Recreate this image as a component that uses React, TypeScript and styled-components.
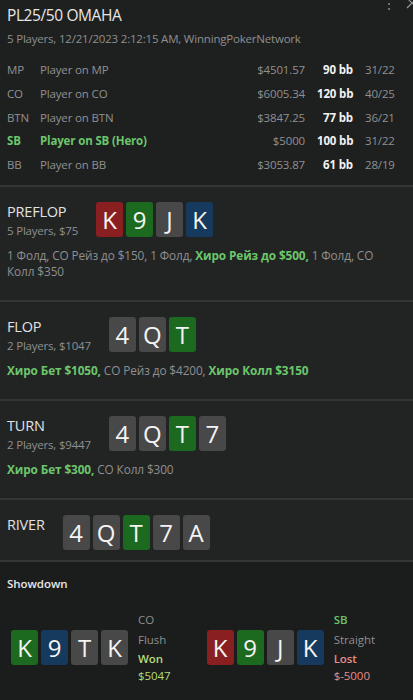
import React from "react";
import styled, { createGlobalStyle } from "styled-components";

const Global = createGlobalStyle`
  html, body { margin: 0; padding: 0; background: #1e2020; }
  body { font-family: "Open Sans", "Noto Sans", sans-serif; }
`;

const Page = styled.div`
  width: 413px;
  min-height: 700px;
  background: #1e2020;
  color: #9a9a9a;
  position: relative;
  overflow: hidden;
`;

const Header = styled.section`
  padding: 4px 8px 9px 7px;
  border-bottom: 2px solid #343636;
`;

const Title = styled.div`
  font-size: 15.5px;
  letter-spacing: -0.4px;
  line-height: 22px;
  color: #e6e6e6;
`;

const Sub = styled.div<{ $mt?: number }>`
  margin-top: ${(p) => p.$mt ?? 0}px;
  font-size: 11.5px;
  letter-spacing: -0.2px;
  line-height: 18px;
  color: #8f8f8f;
`;

const PlayerGrid = styled.div`
  margin-top: 10px;
  display: grid;
  grid-template-columns: 33px 1fr 65px 48px 40px;
  grid-auto-rows: 23.7px;
  align-items: center;
  font-size: 11.5px;
  letter-spacing: -0.15px;
`;

const Cell = styled.div<{ $hero?: boolean; $align?: string; $strong?: boolean; $pr?: number }>`
  color: ${(p) => (p.$strong ? "#f2f2f2" : p.$hero ? "#6cc66c" : "#909090")};
  font-weight: ${(p) => (p.$strong || p.$hero ? 700 : 400)};
  text-align: ${(p) => p.$align || "left"};
  padding-right: ${(p) => p.$pr || 0}px;
  white-space: nowrap;
`;

const TopIcons = styled.div`
  position: absolute;
  top: 0;
  right: -6px;
  display: flex;
  gap: 13px;
`;

const Street = styled.section<{ $pb?: number }>`
  background: #222424;
  padding: 15px 8px ${(p) => p.$pb ?? 21}px 7px;
  border-bottom: 2px solid #343636;
  display: flex;
  flex-direction: column;
  gap: 7px;
`;

const StreetTop = styled.div`
  display: flex;
  align-items: flex-start;
  gap: 18px;
`;

const StreetLabel = styled.div`
  display: flex;
  flex-direction: column;
`;

const StreetName = styled.div`
  font-size: 14.5px;
  letter-spacing: -0.2px;
  line-height: 20px;
  color: #e2e2e2;
`;

const Cards = styled.div`
  display: flex;
  gap: 3px;
`;

const colors: Record<string, string> = {
  r: "#8a1f22",
  g: "#1b6a20",
  x: "#484848",
  b: "#153a5e",
};

const Card = styled.div<{ $c: string }>`
  width: 27px;
  height: 35px;
  border-radius: 3px;
  background: ${(p) => colors[p.$c]};
  color: #f4f4f4;
  font-size: 24px;
  line-height: 35px;
  text-align: center;
`;

const Action = styled.div`
  font-size: 11.8px;
  letter-spacing: -0.1px;
  line-height: 16px;
  color: #8f8f8f;
  padding-right: 20px;
`;

const Hero = styled.span`
  color: #6cc66c;
  font-weight: 700;
`;

const Showdown = styled.section`
  background: #1b1c1c;
  padding: 13px 8px 20px 7px;
`;

const ShowTitle = styled.div`
  font-size: 11.5px;
  letter-spacing: -0.05px;
  line-height: 18px;
  font-weight: 600;
  color: #e8e8e8;
`;

const Hands = styled.div`
  margin-top: 17px;
  display: flex;
  gap: 36px;
  padding-left: 4px;
`;

const Hand = styled.div`
  display: flex;
  align-items: center;
  gap: 10px;
`;

const HandInfo = styled.div`
  display: flex;
  flex-direction: column;
  font-size: 11.5px;
  letter-spacing: -0.05px;
`;

const InfoLine = styled.div<{ $color?: string; $bold?: boolean; $lh?: number }>`
  line-height: ${(p) => p.$lh ?? 20}px;
  color: ${(p) => p.$color || "#8f8f8f"};
  font-weight: ${(p) => (p.$bold ? 600 : 400)};
`;

const players = [
  ["MP", "Player on MP", "$4501.57", "90 bb", "31/22", false],
  ["CO", "Player on CO", "$6005.34", "120 bb", "40/25", false],
  ["BTN", "Player on BTN", "$3847.25", "77 bb", "36/21", false],
  ["SB", "Player on SB (Hero)", "$5000", "100 bb", "31/22", true],
  ["BB", "Player on BB", "$3053.87", "61 bb", "28/19", false],
] as const;

const renderCards = (list: [string, string][]) => (
  <Cards>
    {list.map(([r, c], i) => (
      <Card key={i} $c={c}>
        {r}
      </Card>
    ))}
  </Cards>
);

export default function App() {
  return (
    <Page>
      <Global />
      <TopIcons>
        <svg width="6" height="14" viewBox="0 0 6 14">
          <circle cx="3" cy="4" r="1" fill="#8a8a8a" />
          <circle cx="3" cy="9" r="1" fill="#8a8a8a" />
        </svg>
        <svg width="14" height="14" viewBox="0 0 14 14">
          <path d="M2 -2 L12 8 M12 -2 L2 8" stroke="#9a9a9a" strokeWidth="1.2" fill="none" />
        </svg>
      </TopIcons>
      <Header>
        <Title>PL25/50 OMAHA</Title>
        <Sub $mt={4}>5 Players, 12/21/2023 2:12:15 AM, WinningPokerNetwork</Sub>
        <PlayerGrid>
          {players.map(([pos, name, stack, bb, ratio, hero]) => (
            <React.Fragment key={pos}>
              <Cell $hero={hero}>{pos}</Cell>
              <Cell $hero={hero}>{name}</Cell>
              <Cell $align="right" $pr={12}>{stack}</Cell>
              <Cell $align="right" $pr={12} $strong>
                {bb}
              </Cell>
              <Cell>{ratio}</Cell>
            </React.Fragment>
          ))}
        </PlayerGrid>
      </Header>

      <Street>
        <StreetTop>
          <StreetLabel>
            <StreetName>PREFLOP</StreetName>
            <Sub>5 Players, $75</Sub>
          </StreetLabel>
          {renderCards([["K", "r"], ["9", "g"], ["J", "x"], ["K", "b"]])}
        </StreetTop>
        <Action>
          1 Фолд, CO Рейз до $150, 1 Фолд, <Hero>Хиро Рейз до $500,</Hero> 1 Фолд, CO Колл $350
        </Action>
      </Street>

      <Street>
        <StreetTop>
          <StreetLabel>
            <StreetName>FLOP</StreetName>
            <Sub>2 Players, $1047</Sub>
          </StreetLabel>
          {renderCards([["4", "x"], ["Q", "x"], ["T", "g"]])}
        </StreetTop>
        <Action>
          <Hero>Хиро Бет $1050,</Hero> CO Рейз до $4200, <Hero>Хиро Колл $3150</Hero>
        </Action>
      </Street>

      <Street>
        <StreetTop>
          <StreetLabel>
            <StreetName>TURN</StreetName>
            <Sub>2 Players, $9447</Sub>
          </StreetLabel>
          {renderCards([["4", "x"], ["Q", "x"], ["T", "g"], ["7", "x"]])}
        </StreetTop>
        <Action>
          <Hero>Хиро Бет $300,</Hero> CO Колл $300
        </Action>
      </Street>

      <Street $pb={10}>
        <StreetTop>
          <StreetLabel>
            <StreetName>RIVER</StreetName>
          </StreetLabel>
          {renderCards([["4", "x"], ["Q", "x"], ["T", "g"], ["7", "x"], ["A", "x"]])}
        </StreetTop>
      </Street>

      <Showdown>
        <ShowTitle>Showdown</ShowTitle>
        <Hands>
          <Hand>
            {renderCards([["K", "g"], ["9", "b"], ["T", "x"], ["K", "x"]])}
            <HandInfo>
              <InfoLine>CO</InfoLine>
              <InfoLine>Flush</InfoLine>
              <InfoLine $color="#b4dc78" $bold $lh={18}>Won</InfoLine>
              <InfoLine $color="#b4dc78" $lh={16}>$5047</InfoLine>
            </HandInfo>
          </Hand>
          <Hand>
            {renderCards([["K", "r"], ["9", "g"], ["J", "x"], ["K", "b"]])}
            <HandInfo>
              <InfoLine $color="#6cc66c" $bold>SB</InfoLine>
              <InfoLine>Straight</InfoLine>
              <InfoLine $color="#e58f86" $bold $lh={18}>Lost</InfoLine>
              <InfoLine $color="#e58f86" $lh={16}>$-5000</InfoLine>
            </HandInfo>
          </Hand>
        </Hands>
      </Showdown>
    </Page>
  );
}
